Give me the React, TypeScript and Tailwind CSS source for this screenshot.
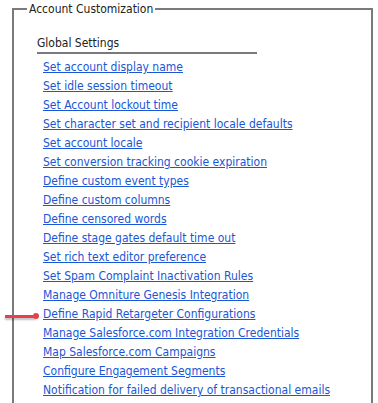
const links = [
  "Set account display name",
  "Set idle session timeout",
  "Set Account lockout time",
  "Set character set and recipient locale defaults",
  "Set account locale",
  "Set conversion tracking cookie expiration",
  "Define custom event types",
  "Define custom columns",
  "Define censored words",
  "Define stage gates default time out",
  "Set rich text editor preference",
  "Set Spam Complaint Inactivation Rules",
  "Manage Omniture Genesis Integration",
  "Define Rapid Retargeter Configurations",
  "Manage Salesforce.com Integration Credentials",
  "Map Salesforce.com Campaigns",
  "Configure Engagement Segments",
  "Notification for failed delivery of transactional emails",
];

export default function App() {
  return (
    <div className="w-[378px] h-[403px] overflow-hidden bg-white font-['DejaVu_Sans_Condensed','DejaVu_Sans',sans-serif] text-[12px]">
      <div className="relative ml-[12px] mr-[5px] mt-[8px] h-[420px] border-l-2 border-t-2 border-r-2 border-[#7a7a7a] pl-[23px]">
        <div className="absolute -top-[10px] left-[13px] bg-white px-[2px] text-[#222] leading-[18px]">
          Account Customization
        </div>
        <div className="pt-[25px] w-[220px] border-b-2 border-[#7a7a7a] pb-[1px] text-[#222] leading-[16px]">
          Global Settings
        </div>
        <ul className="mt-[4px] pl-[6px]">
          {links.map((l) => (
            <li key={l} className="h-[19px] leading-[19px] relative">
              {l === "Define Rapid Retargeter Configurations" && (
                <span className="absolute left-[-38px] top-[8px] flex items-center">
                  <span className="block w-[31px] h-[3px] bg-[#e8404a] shadow-[0_2px_2px_rgba(0,0,0,0.25)]" />
                  <span className="block -ml-[3px] w-[6px] h-[6px] rounded-full bg-[#e8404a]" />
                </span>
              )}
              <a href="#" className="text-[#1a56d6] underline">
                {l}
              </a>
            </li>
          ))}
        </ul>
      </div>
    </div>
  );
}
